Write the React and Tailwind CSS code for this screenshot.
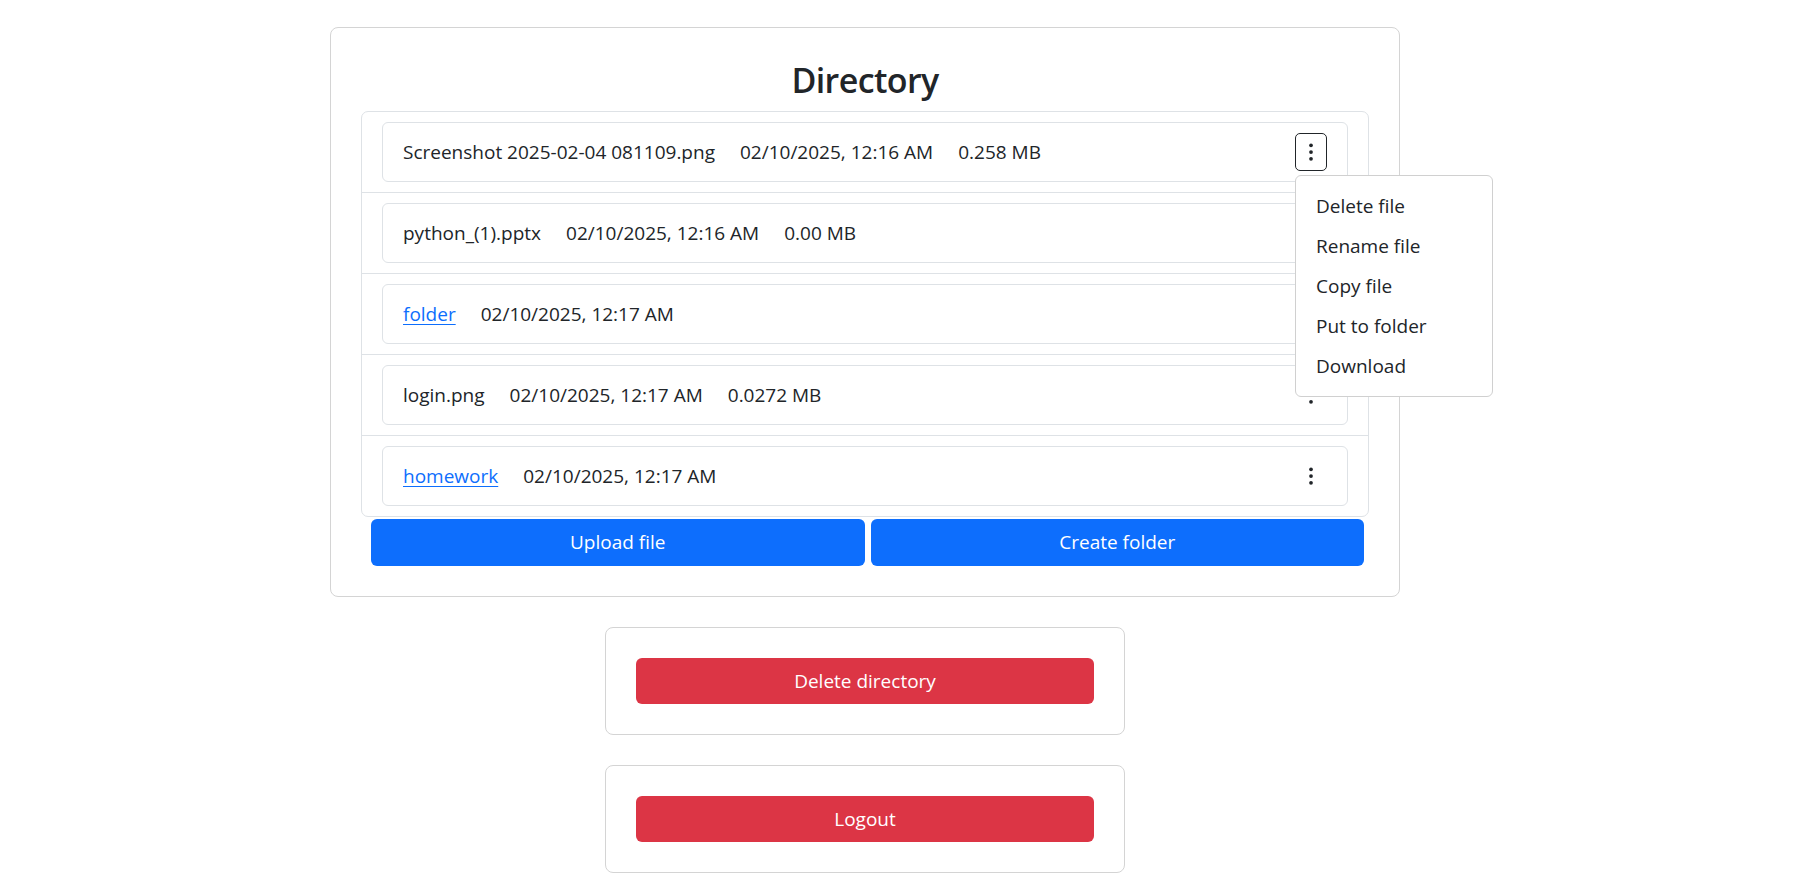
import React from "react";

const FONT = { fontFamily: '"Open Sans", "Noto Sans", sans-serif' };

function Dots() {
  return (
    <svg width="20" height="20" viewBox="0 0 16 16" fill="#212529" aria-hidden="true">
      <circle cx="8" cy="2.6" r="1.5" />
      <circle cx="8" cy="8" r="1.5" />
      <circle cx="8" cy="13.4" r="1.5" />
    </svg>
  );
}

const rows = [
  { name: "Screenshot 2025-02-04 081109.png", date: "02/10/2025, 12:16 AM", size: "0.258 MB", open: true },
  { name: "python_(1).pptx", date: "02/10/2025, 12:16 AM", size: "0.00 MB" },
  { name: "folder", date: "02/10/2025, 12:17 AM", link: true },
  { name: "login.png", date: "02/10/2025, 12:17 AM", size: "0.0272 MB" },
  { name: "homework", date: "02/10/2025, 12:17 AM", link: true },
];

const menu = ["Delete file", "Rename file", "Copy file", "Put to folder", "Download"];

function Row({ r, last }) {
  return (
    <div className={`px-[20px] py-[10px] ${last ? "" : "border-b border-[#dee2e6]"}`}>
      <div className="flex h-[60px] items-center rounded-[6px] border border-[#dee2e6] pl-[20px] pr-[20px]">
        <div className="flex items-center gap-[25px]">
          {r.link ? (
            <a href="#" className="text-[#0d6efd] underline underline-offset-[3px]">{r.name}</a>
          ) : (
            <span>{r.name}</span>
          )}
          <span>{r.date}</span>
          {r.size && <span>{r.size}</span>}
        </div>
        <div className="relative ml-auto">
          <button
            className={`flex h-[38px] w-[32px] items-center justify-center rounded-[5px] border ${
              r.open ? "border-[#212529]" : "border-transparent"
            }`}
          >
            <Dots />
          </button>
          {r.open && (
            <div className="absolute left-0 top-full z-10 mt-[4px] w-[198px] rounded-[6px] border border-[#d0d0d0] bg-white py-[10px]">
              {menu.map((m) => (
                <div key={m} className="flex h-[40px] items-center pl-[20px] text-[#212529]">
                  {m}
                </div>
              ))}
            </div>
          )}
        </div>
      </div>
    </div>
  );
}

export default function App() {
  return (
    <div
      className="flex min-h-[896px] flex-col items-center bg-white pr-[72px] pt-[27px] text-[19px] leading-[1.5] text-[#212529]"
      style={FONT}
    >
      <div className="w-[1070px] rounded-[8px] border border-[#d4d4d4] p-[30px]">
        <h2 className="mb-[9px] text-center text-[34px] font-semibold leading-[44px] tracking-[-0.6px]">Directory</h2>
        <div className="rounded-[7px] border border-[#dee2e6]">
          {rows.map((r, i) => (
            <Row key={r.name} r={r} last={i === rows.length - 1} />
          ))}
        </div>
        <div className="mt-[2px] flex gap-[6px] pl-[10px] pr-[5px]">
          <button className="h-[47px] flex-1 rounded-[6px] bg-[#0d6efd] text-white">Upload file</button>
          <button className="h-[47px] flex-1 rounded-[6px] bg-[#0d6efd] text-white">Create folder</button>
        </div>
      </div>

      <div className="mt-[30px] w-[520px] rounded-[8px] border border-[#d4d4d4] p-[30px]">
        <button className="h-[46px] w-full rounded-[6px] bg-[#dc3545] text-white">Delete directory</button>
      </div>

      <div className="mt-[30px] w-[520px] rounded-[8px] border border-[#d4d4d4] p-[30px]">
        <button className="h-[46px] w-full rounded-[6px] bg-[#dc3545] text-white">Logout</button>
      </div>
    </div>
  );
}
